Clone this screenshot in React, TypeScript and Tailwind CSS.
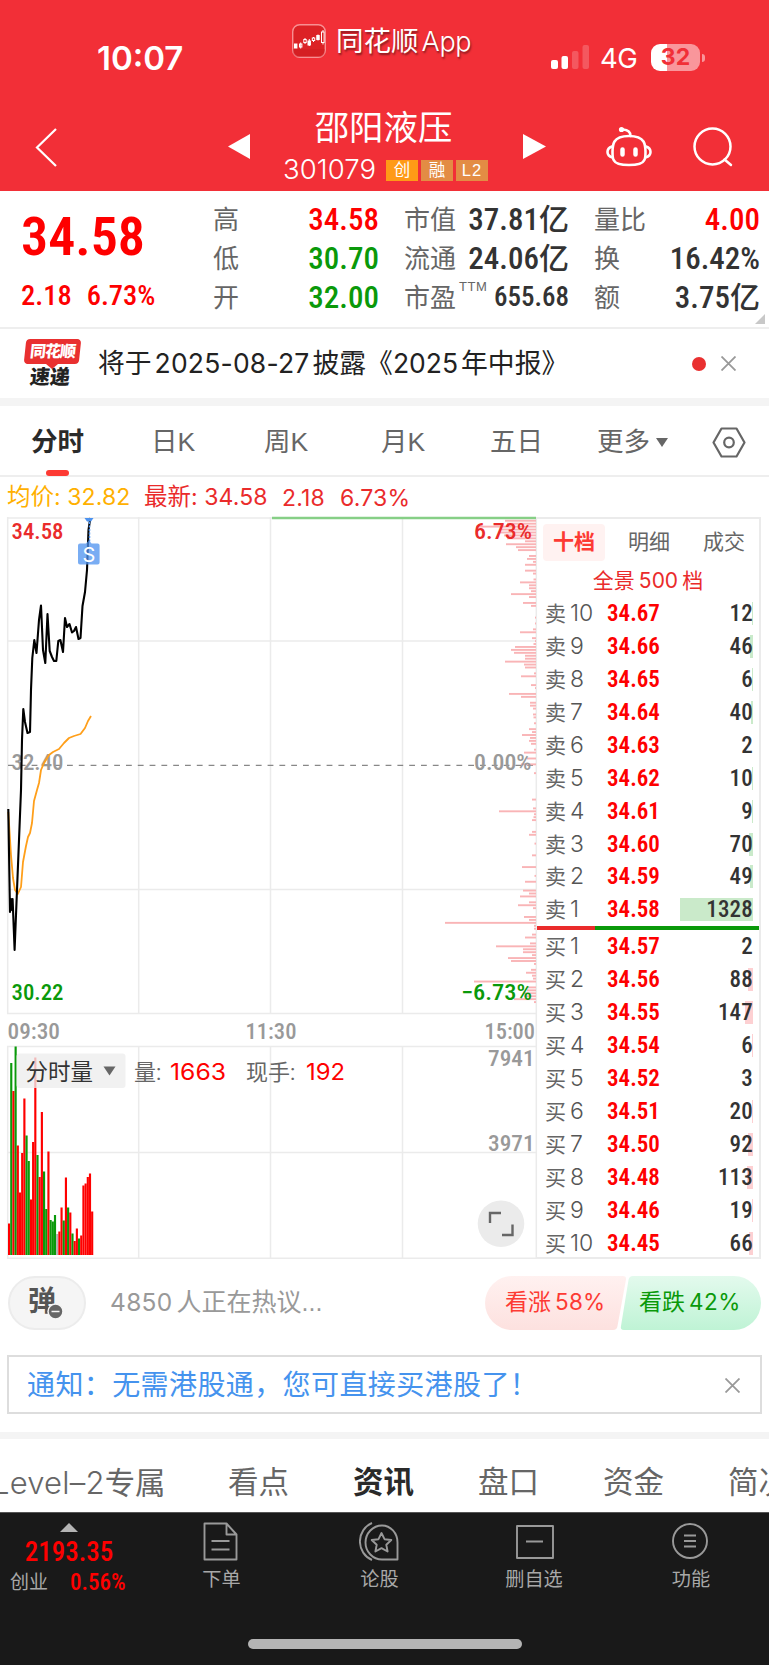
import type { ReactNode } from 'react'
import { clsx } from 'clsx'

const UP = '#fe0000'
const DOWN = '#0a990a'

const quoteColumns = [
  {
    className: 'ml-[213px] w-[166px]',
    rows: [
      { label: '高', value: '34.58', color: 'text-[#fe0000]' },
      { label: '低', value: '30.70', color: 'text-[#0a990a]' },
      { label: '开', value: '32.00', color: 'text-[#0a990a]' },
    ],
  },
  {
    className: 'ml-[25px] w-[165px]',
    rows: [
      { label: '市值', value: '37.81', unit: '亿' },
      { label: '流通', value: '24.06', unit: '亿' },
      { label: '市盈', sup: 'TTM', value: '655.68', small: true },
    ],
  },
  {
    className: 'ml-[25px] w-[166px]',
    rows: [
      { label: '量比', value: '4.00', color: 'text-[#fe0000]' },
      { label: '换', value: '16.42%' },
      { label: '额', value: '3.75', unit: '亿' },
    ],
  },
] as {
  className: string
  rows: { label: string; value: string; unit?: string; sup?: string; color?: string; small?: boolean }[]
}[]

const asks: [string, string, number][] = [
  ['10', '34.67', 12],
  ['9', '34.66', 46],
  ['8', '34.65', 6],
  ['7', '34.64', 40],
  ['6', '34.63', 2],
  ['5', '34.62', 10],
  ['4', '34.61', 9],
  ['3', '34.60', 70],
  ['2', '34.59', 49],
  ['1', '34.58', 1328],
]

const bids: [string, string, number][] = [
  ['1', '34.57', 2],
  ['2', '34.56', 88],
  ['3', '34.55', 147],
  ['4', '34.54', 6],
  ['5', '34.52', 3],
  ['6', '34.51', 20],
  ['7', '34.50', 92],
  ['8', '34.48', 113],
  ['9', '34.46', 19],
  ['10', '34.45', 66],
]

const pricePoints =
  '8.3,809 10,912 11,899 12,910 12.6,899 14.6,950 17,890 21,790 22,740 23.3,709 25,722 27.5,733 30,732 31,690 32.3,658 34.3,640 36.5,653 39,620 41,605.5 43,650 45.3,663 47.5,614 49.7,651 52,657 54,661 56.3,661 58.3,641 60.4,640 63,652 65,618 67,627 69.5,624 72,632.5 74,631 76,627 78.5,639 80.5,638 82.5,606 85,592 87,570 88.5,530 90.3,518'

const avgPoints =
  '8.3,812 11,855 13,878 15,890 17.8,894 21,887 23,862 26,846 28,837 30,833 32,823 34,801 37,790 39,783 41,770 44,763 49,755 53,752 59,749 64,743 69,738 74,736 80.5,734 85,728 88,721 91,716'

// r = up, g = down, n = flat
const volumes: [string, number][] = [
  ['r', 31.5], ['g', 192], ['r', 164], ['g', 208.5], ['r', 109.5], ['r', 62.5], ['r', 102],
  ['r', 156.5], ['g', 119.5], ['g', 94], ['r', 55.5], ['r', 113], ['r', 197.5], ['g', 100],
  ['r', 78], ['r', 143], ['g', 83.5], ['g', 46], ['r', 103.5], ['g', 35], ['g', 33.5],
  ['g', 40], ['n', 21], ['r', 23.5], ['r', 47.5], ['g', 34.5], ['r', 77.5], ['g', 47.5],
  ['r', 42.5], ['g', 21.5], ['r', 14], ['r', 26.5], ['g', 16.5], ['r', 19.5], ['r', 69.5],
  ['r', 71.5], ['r', 78], ['r', 81.5], ['r', 43.5],
]

const volumeColor: Record<string, string> = { r: UP, g: DOWN, n: '#b0b0b0' }

// turnover by price level: [slot, bar length], one slot every 2.94px
const levels: [number, number][] = [
  [0, 31], [1, 29], [2, 60], [3, 36], [4, 36], [5, 32], [6, 29], [7, 11], [8, 30], [9, 20], [10, 18],
  [12, 7], [13, 9], [14, 3], [15, 11], [17, 11], [18, 3], [20, 2.5], [21, 16], [22, 7], [23, 7],
  [24, 5], [25, 25], [26, 7], [28, 13], [29, 5], [33, 1], [35, 1], [37, 3], [38, 16], [40, 4],
  [41, 1], [42, 2.5], [43, 21], [44, 25], [45, 22], [46, 11], [47, 11], [48, 31], [49, 12], [50, 11],
  [52, 2], [53, 15], [56, 5], [57, 1], [59, 27], [60, 15], [62, 6], [63, 6], [64, 3], [66, 3], [67, 2.5],
  [69, 2], [71, 7], [72, 4], [73, 14], [74, 6], [75, 7], [76, 5], [78, 2], [79, 12], [81, 9], [83, 15],
  [86, 2], [95, 4], [98, 3], [99, 37], [100, 2], [101, 2.5], [102, 4], [106, 4], [107, 7], [110, 1.5],
  [114, 4], [118, 14], [121, 1.5], [123, 11], [126, 13], [127, 7], [128, 16], [130, 7], [131, 18],
  [132, 3], [135, 12], [136, 7], [137, 91], [138, 2], [139, 2], [141, 4], [142, 11], [144, 6],
  [145, 40], [146, 13], [147, 13], [148, 4], [149, 28], [150, 25], [151, 2], [153, 5], [154, 10],
  [155, 4], [156, 3], [157, 62], [159, 8], [160, 9], [161, 13], [162, 12], [163, 22], [164, 2],
]

function StatusBar() {
  return (
    <div className="flex h-[96px] items-start text-white">
      <div className="ml-[97px] mt-[38px] w-[195px] font-['Inter'] text-[33px] font-semibold leading-[40px] tracking-[0px]">
        10:07
      </div>
      <svg className="mt-[24px] h-[34px] w-[34px] shrink-0" viewBox="0 0 34 34">
        <rect x="0.7" y="0.7" width="32.6" height="32.6" rx="7" fill="#dc2226" stroke="#f88f92" strokeWidth="1.4" />
        <path d="M0.8 25h32v2q0 6-6 6h-20q-6 0-6-6z" fill="#c91a20" opacity="0.35" />
        <g stroke="#fff" strokeWidth="1" fill="none">
          <rect x="2.5" y="20" width="2.4" height="4" fill="#fff" />
          <rect x="7.5" y="20" width="2.4" height="3" />
          <path d="M8.7 18.5v6M13 14v6M17.3 15v7M21.5 13v5M26 10.5v6M31 6v14.5" />
          <rect x="11.8" y="15.5" width="2.4" height="3" fill="#dc2226" />
          <rect x="16" y="17" width="2.4" height="4" fill="#fff" />
          <rect x="20.3" y="14" width="2.4" height="2.5" fill="#dc2226" />
          <rect x="24.8" y="11.5" width="2.4" height="4" fill="#fff" />
          <rect x="29.5" y="8" width="2.6" height="10.5" fill="#dc2226" />
        </g>
      </svg>
      <div className="ml-[10px] mt-[22px] w-[215px] text-[27.500px] leading-[40px] [text-shadow:1px_2px_2px_rgba(0,0,0,0.45)]">
        同花顺<span className="ml-[3px] font-['Inter'] text-[27px] font-light tracking-[-0.3px]">App</span>
      </div>
      <svg className="mt-[45px] h-[24px] w-[38px] shrink-0" viewBox="0 0 38 24" fill="#fff">
        <rect x="0" y="15" width="7" height="9" rx="2" />
        <rect x="10.5" y="11" width="6.5" height="13" rx="2" />
        <rect x="21" y="6" width="6.5" height="18" rx="2" opacity="0.2" />
        <rect x="31.5" y="0" width="6.5" height="24" rx="2" opacity="0.2" />
      </svg>
      <div className="ml-[11px] mt-[38px] w-[51px] font-['Inter'] text-[27.500px] leading-[40px] tracking-[-0.4px]">4G</div>
      <div className="mt-[44px] flex h-[27px] w-[49px] items-center justify-center rounded-[9px] bg-linear-to-r from-white from-33% to-[#f9969b] to-33% font-['Inter'] text-[23px] font-bold leading-none text-[#f12f37]">
        32
      </div>
      <div className="ml-[2px] mt-[54px] h-[8px] w-[3px] rounded-r-full bg-[#f9969b]" />
    </div>
  )
}

function Tag({ children, className }: { children: ReactNode; className: string }) {
  return (
    <span className={clsx('flex h-[21px] w-[32px] items-center justify-center text-[16.500px] leading-none text-white', className)}>
      {children}
    </span>
  )
}

function TitleBar() {
  return (
    <div className="flex h-[95px] items-start text-white">
      <svg className="ml-[35px] mt-[32px] h-[39px] w-[22px] shrink-0" viewBox="0 0 22 39" fill="none" stroke="#fff" strokeWidth="2.2">
        <path d="M21 1L2 19.5L21 38" />
      </svg>
      <svg className="ml-[171px] mt-[38px] h-[25px] w-[22px] shrink-0" viewBox="0 0 22 25" fill="#fff">
        <path d="M0 12.500L22 0v25z" />
      </svg>
      <div className="ml-[33px] w-[206px]">
        <div className="mt-[12px] pr-[5px] text-center text-[34.400px] leading-[40px]">邵阳液压</div>
        <div className="mt-[7px] flex h-[30px] items-center">
          <span className="w-[103px] text-nowrap font-['Inter'] text-[27.500px] font-light tracking-[0.1px]">301079</span>
          <div className="flex gap-[3px]">
            <Tag className="bg-[#ff9a16]">创</Tag>
            <Tag className="bg-[#e38c44]">融</Tag>
            <Tag className="bg-[#e38c44] tracking-[1px]">L2</Tag>
          </div>
        </div>
      </div>
      <svg className="ml-[34px] mt-[38px] h-[25px] w-[23px] shrink-0" viewBox="0 0 23 25" fill="#fff">
        <path d="M23 12.500L0 0v25z" />
      </svg>
      <svg className="ml-[60px] mt-[30px] h-[42px] w-[46px] shrink-0" viewBox="0 0 46 42" fill="none" stroke="#fff" strokeWidth="2.6" strokeLinecap="round">
        <path d="M8.5 15.5Q12 10 23 10T37.5 15.5Q39.5 19 39.5 26T38 34.500Q36 39 23 39T8 34.500Q6.500 33 6.500 26T8.500 15.500Z" />
        <path d="M6 20.500Q1.500 22 1.500 26T6.500 31.500M40 20.500Q44.500 22 44.500 26T39.500 31.500M24.500 10Q24.500 4 17 3.500" />
        <circle cx="15.5" cy="3.5" r="1.3" fill="#fff" />
        <path d="M16.500 23.500v5M29.500 23.500v5" strokeWidth="4.5" />
      </svg>
      <svg className="ml-[41px] mt-[31px] h-[41px] w-[40px] shrink-0" viewBox="0 0 40 41" fill="none" stroke="#fff" strokeWidth="2.5" strokeLinecap="round">
        <circle cx="19.5" cy="19.5" r="18" />
        <path d="M31.500 32.500l6.500 5.500" />
      </svg>
    </div>
  )
}

function Quote() {
  return (
    <div className="relative flex h-[138px] border-b-2 border-[#eeeeee] pt-[9px]">
      <div className="absolute left-[21px] top-[14px] font-['Roboto'] text-[#fe0000]">
        <div className="text-nowrap text-[54px] font-semibold leading-[64px] [font-stretch:87%]">34.58</div>
        <div className="mt-[12px] flex gap-[15px] text-nowrap text-[28.500px] font-medium leading-[30px] [font-stretch:87%]">
          <span>2.18</span>
          <span>6.73%</span>
        </div>
      </div>
      {quoteColumns.map((column) => (
        <div key={column.className} className={clsx('shrink-0', column.className)}>
          {column.rows.map((row) => (
            <div key={row.label} className="flex h-[39px] items-center text-nowrap text-[26px] leading-none text-[#666]">
              <span>{row.label}</span>
              {row.sup && <span className="mb-[22px] ml-[3px] w-0 text-[13px] tracking-[0.5px]">{row.sup}</span>}
              <span
                className={clsx(
                  "ml-auto flex items-center font-['Roboto','Noto_Sans_CJK_SC'] font-medium [font-stretch:87%]",
                  row.small ? 'text-[27px]' : 'text-[31px]',
                  row.color ?? 'text-[#333]',
                )}
              >
                {row.value}
                {row.unit && <span className="text-[30px]">{row.unit}</span>}
              </span>
            </div>
          ))}
        </div>
      ))}
      <svg className="absolute bottom-[3px] right-[4px] h-[10px] w-[10px]" viewBox="0 0 10 10">
        <path d="M10 0v10H0z" fill="#c8c8c8" />
      </svg>
    </div>
  )
}

function Close({ className }: { className?: string }) {
  return (
    <svg className={clsx('h-[15px] w-[15px] shrink-0', className)} viewBox="0 0 15 15" stroke="#999" strokeWidth="1.8">
      <path d="M0.500 0.500l14 14M14.500 0.500l-14 14" />
    </svg>
  )
}

function NewsBar() {
  return (
    <div className="flex h-[69px] items-center">
      <div className="relative ml-[24px] h-[49px] w-[58px] shrink-0 text-nowrap">
        <div className="ml-[1px] flex h-[25px] w-[55px] -skew-x-6 items-center justify-center rounded-[4px] bg-[#e93030] text-[16px] font-black leading-none tracking-[-1px] text-white">
          同花顺
        </div>
        <div className="ml-[22px] h-0 w-0 border-x-[6px] border-t-[5px] border-x-transparent border-t-[#e93030]" />
        <div className="absolute left-[6px] top-[28px] -skew-x-6 text-[20px] font-black leading-[20px] text-[#222]">速递</div>
      </div>
      <div className="ml-[16px] w-[592px] text-nowrap text-[26.800px] leading-[40px] text-[#222]">
        将于<span className="mx-[3px] font-['Inter'] text-[26.500px] tracking-[0.2px]">2025-08-27</span>披露《
        <span className="mr-[3px] font-['Inter'] text-[26.500px]">2025</span>年中报》
      </div>
      <div className="ml-[2px] h-[14px] w-[14px] shrink-0 rounded-full bg-[#e93030]" />
      <Close className="ml-[15px]" />
    </div>
  )
}

function PeriodTabs() {
  return (
    <div className="flex h-[71px] items-center border-b-2 border-[#eeeeee] pt-[4px] text-nowrap text-[26.500px] text-[#666]">
      <div className="relative ml-[31px] w-[120px] font-bold text-[#2a2a2a]">
        分时
        <div className="absolute -bottom-[14px] left-[15px] h-[6px] w-[23px] rounded-[3px] bg-[#fd3a33]" />
      </div>
      <div className="w-[113px]">日K</div>
      <div className="w-[117px]">周K</div>
      <div className="w-[109px]">月K</div>
      <div className="w-[107px]">五日</div>
      <div className="flex w-[115px] items-center">
        更多
        <div className="ml-[6px] h-0 w-0 border-x-[6px] border-t-[9px] border-x-transparent border-t-[#666]" />
      </div>
      <svg className="h-[31px] w-[34px]" viewBox="0 0 34 31" fill="none" stroke="#666" strokeWidth="2.2">
        <path d="M9.500 1.500h15L32.500 15.500L24.500 29.500h-15L1.500 15.500z" strokeLinejoin="round" />
        <circle cx="17" cy="15.5" r="4.8" />
      </svg>
    </div>
  )
}

function Legend() {
  return (
    <div className="flex h-[40px] items-center pl-[7px] pt-[2px] text-nowrap text-[23.500px] text-[#ea2b2b]">
      <span className="w-[137px] text-[#ffb000]">
        均价<span className="font-['Inter'] text-[23px] tracking-[0.1px]">: 32.82</span>
      </span>
      <span className="w-[138px]">
        最新<span className="font-['Inter'] text-[23px] tracking-[0.1px]">: 34.58</span>
      </span>
      <span className="w-[58px] font-['Inter'] text-[23px] tracking-[0.2px]">2.18</span>
      <span className="font-['Inter'] text-[23px] tracking-[0.2px]">6.73%</span>
    </div>
  )
}

function Charts() {
  return (
    <svg className="h-[742px] w-[530px] shrink-0 overflow-visible" viewBox="7 517 530 742" fontFamily="Roboto, 'Noto Sans CJK SC', sans-serif">
      <g stroke="#ebebeb" strokeWidth="1.5" fill="none">
        <path d="M7 518H537M7 641H537M7 889.500H537M7 1013.500H537M7.700 517V1014M138.700 517V1014M270.500 517V1014M402.500 517V1014" />
        <path d="M7 1046.500H537M7 1152.500H537M7 1258.200H537M7.700 1046V1259M138.700 1046V1259M270.500 1046V1259M402.500 1046V1259M536.300 517V1259" />
      </g>
      <path d="M272 518H536" stroke="#86cf86" strokeWidth="2.5" />
      <path d="M8 765.400H536" stroke="#888" strokeWidth="1.3" strokeDasharray="5.8 6" />
      <g fill="#f9b4b6">
        {levels.map(([slot, length]) => (
          <rect key={slot} x={536 - length} y={519.8 + slot * 2.935} width={length} height="1.9" />
        ))}
      </g>
      <g fontSize="22.5" fontWeight="500" className="[font-stretch:87%]">
        <text x="11.5" y="539" fill="#ea2b2b" textLength="52" lengthAdjust="spacingAndGlyphs">34.58</text>
        <text x="474" y="539" fill="#ea2b2b" textLength="58" lengthAdjust="spacingAndGlyphs">6.73%</text>
        <text x="11.5" y="769.5" fill="#999" textLength="52" lengthAdjust="spacingAndGlyphs">32.40</text>
        <text x="474" y="769.5" fill="#999" textLength="57.5" lengthAdjust="spacingAndGlyphs">0.00%</text>
        <text x="11.5" y="1000" fill={DOWN} textLength="52" lengthAdjust="spacingAndGlyphs">30.22</text>
        <text x="461" y="1000" fill={DOWN} textLength="71" lengthAdjust="spacingAndGlyphs">−6.73%</text>
        <g fill="#999">
          <text x="7.5" y="1039" textLength="52.5" lengthAdjust="spacingAndGlyphs">09:30</text>
          <text x="245.5" y="1039" textLength="51" lengthAdjust="spacingAndGlyphs">11:30</text>
          <text x="484.5" y="1039" textLength="50.5" lengthAdjust="spacingAndGlyphs">15:00</text>
          <text x="488" y="1065.5" textLength="46.5" lengthAdjust="spacingAndGlyphs">7941</text>
          <text x="488" y="1151" textLength="46.5" lengthAdjust="spacingAndGlyphs">3971</text>
        </g>
      </g>
      <polyline points={avgPoints} fill="none" stroke="#ff9f1a" strokeWidth="1.8" strokeLinejoin="round" />
      <polyline points={pricePoints} fill="none" stroke="#000" strokeWidth="2.1" strokeLinejoin="round" />

      {/* Sell marker */}
      <path d="M84.500 518h9l-2.500 3.500h-4z" fill="#4c92ef" />
      <path d="M89.500 522v20" stroke="#4c92ef" strokeWidth="1.5" strokeDasharray="2 1.5" />
      <path d="M80 543.500h6l2.800-3 2.800 3h6q2 0 2 2v17q0 2-2 2H80q-2 0-2-2v-17q0-2 2-2z" fill="#4c92ef" opacity="0.75" />
      <text x="89" y="561.5" textAnchor="middle" fill="#fff" fontSize="20" fontFamily="Inter">S</text>

      {volumes.map(([kind, height], i) => (
        <rect key={i} x={8 + i * 2.187} y={1255 - height} width="2.15" height={height} fill={volumeColor[kind]} />
      ))}
      <rect x="16.5" y="1053.5" width="109" height="34.5" rx="3" fill="#ededed" opacity="0.78" />
      <text x="25.5" y="1079.5" fontSize="22.5" fill="#333" textLength="67.5">分时量</text>
      <path d="M103.500 1066.500h12l-6 9z" fill="#666" />
      <g fontSize="22">
        <text x="134" y="1079.5" fill="#666">量:</text>
        <text x="170" y="1080" fill={UP} fontFamily="Inter" fontSize="23" textLength="56" lengthAdjust="spacingAndGlyphs">1663</text>
        <text x="246" y="1079.5" fill="#666">现手:</text>
        <text x="306" y="1080" fill={UP} fontFamily="Inter" fontSize="23" textLength="39" lengthAdjust="spacingAndGlyphs">192</text>
      </g>

      <circle cx="501" cy="1223.7" r="23.3" fill="#ebebeb" />
      <path d="M490 1223v-10h11M502 1235h10.500v-10.500" fill="none" stroke="#666" strokeWidth="2.4" />
    </svg>
  )
}

function OrderRow({ side, row }: { side: '卖' | '买'; row: [string, string, number] }) {
  const [level, price, amount] = row
  return (
    <div className="relative flex h-[32.940px] items-center pl-[8px] text-nowrap leading-none">
      <span className="w-[25px] text-[21px] text-[#666]">{side}</span>
      <span className="w-[37px] font-['Inter'] text-[23px] font-light text-[#555]">{level}</span>
      <span className="font-['Roboto'] text-[23px] font-semibold text-[#fe0000] [font-stretch:87%]">{price}</span>
      <div
        className={clsx('absolute right-[6px] h-[23px]', side === '卖' ? 'bg-[#caeaca]' : 'bg-[#fdd0d2]')}
        style={{ width: amount < 5 ? 0 : Math.max(0.6, amount * 0.055) }}
      />
      <span className="relative ml-auto mr-[6px] font-['Roboto'] text-[23px] font-medium tracking-[0.2px] text-[#333] [font-stretch:87%]">
        {amount}
      </span>
    </div>
  )
}

function OrderBook() {
  return (
    <div className="h-[742px] w-[224px] shrink-0 border-y-2 border-r-2 border-[#ebebeb]">
      <div className="flex h-[46px] items-center pl-[6px] text-[21px] text-[#666]">
        <div className="flex h-[37px] w-[62px] items-center justify-center rounded-[4px] bg-[#fff2f1] font-bold text-[#fd3a33]">
          十档
        </div>
        <div className="ml-[23px]">明细</div>
        <div className="ml-[33px]">成交</div>
      </div>
      <div className="flex h-[32px] items-center justify-center text-[21px] text-[#ea2b2b]">
        全景<span className="mx-[4px] font-['Inter'] text-[21px]">500</span>档
      </div>
      {asks.map((row) => (
        <OrderRow key={row[0]} side="卖" row={row} />
      ))}
      <div className="flex h-[4px]">
        <div className="w-[58px] bg-[#ea2b2b]" />
        <div className="flex-1 bg-[#0a990a]" />
      </div>
      {bids.map((row) => (
        <OrderRow key={row[0]} side="买" row={row} />
      ))}
    </div>
  )
}

function Discussion() {
  return (
    <div className="flex h-[96px] items-center pb-[9px]">
      <div className="relative ml-[8px] h-[54px] w-[78px] shrink-0 rounded-full border-2 border-[#ececec] bg-[#f5f5f5]">
        <span className="absolute left-[18px] top-[8px] text-[28px] font-bold leading-[32px] text-[#555]">弹</span>
        <svg className="absolute left-[37px] top-[25px] h-[17px] w-[17px]" viewBox="0 0 17 17">
          <circle cx="8.5" cy="8.5" r="7.5" fill="#666" stroke="#f5f5f5" strokeWidth="1.5" />
          <path d="M4.500 8.500h8" stroke="#f5f5f5" strokeWidth="1.5" />
        </svg>
      </div>
      <div className="ml-[24px] w-[375px] text-nowrap text-[25px] text-[#999]">
        <span className="mr-[4px] font-['Inter'] text-[24.500px] tracking-[0.3px]">4850</span>人正在热议...
      </div>
      <div className="relative h-[54px] w-[276px]">
        <svg className="absolute inset-0 h-[54px] w-[276px]" viewBox="0 0 276 54">
          <defs>
            <linearGradient id="bull" x2="0" y2="1">
              <stop stopColor="#fff1f0" />
              <stop offset="1" stopColor="#fde1df" />
            </linearGradient>
            <linearGradient id="bear" x2="0" y2="1">
              <stop stopColor="#e3faed" />
              <stop offset="1" stopColor="#bff3d5" />
            </linearGradient>
          </defs>
          <path d="M27 0H138Q141.500 0 141 3.500L132.500 50Q132 54 128 54H27A27 27 0 0 1 27 0Z" fill="url(#bull)" />
          <path d="M148 0H249A27 27 0 0 1 249 54H139Q135 54 136 50L143.500 4Q144.200 0 148 0Z" fill="url(#bear)" />
        </svg>
        <div className="relative flex h-full items-center text-nowrap text-[23px]">
          <span className="ml-[20px] w-[134px] text-[#fd3a33]">
            看涨<span className="ml-[4px] font-['Inter'] text-[22.500px] tracking-[0.2px]">58%</span>
          </span>
          <span className="text-[#0a990a]">
            看跌<span className="ml-[4px] font-['Inter'] text-[22.500px] tracking-[0.5px]">42%</span>
          </span>
        </div>
      </div>
    </div>
  )
}

function InfoTabs() {
  return (
    <div className="flex h-[73px] items-center overflow-hidden pt-[15px] text-nowrap text-[30.500px] text-[#666]">
      <div className="-ml-[8px] w-[236px] shrink-0">
        <span className="font-['Inter'] text-[31px] font-light tracking-[0.2px]">Level–2</span>专属
      </div>
      <div className="w-[125px] shrink-0">看点</div>
      <div className="w-[125px] shrink-0 font-bold text-[#2a2a2a]">资讯</div>
      <div className="w-[125px] shrink-0">盘口</div>
      <div className="w-[125px] shrink-0">资金</div>
      <div className="shrink-0">简况</div>
    </div>
  )
}

function NavItem({ label, className, children }: { label: string; className: string; children: ReactNode }) {
  return (
    <div className={clsx('flex shrink-0 flex-col items-center pt-[8px]', className)}>
      <svg className="h-[40px] w-[42px]" viewBox="0 0 42 40" fill="none" stroke="#999" strokeWidth="1.9" strokeLinejoin="round">
        {children}
      </svg>
      <span className="mt-[4px] text-nowrap text-[19.200px] leading-[30px]">{label}</span>
    </div>
  )
}

function BottomNav() {
  return (
    <div className="h-[153px] border-t border-[#555] bg-[#191919] text-[#a8a8a8]">
      <div className="flex h-[126px]">
        <div className="w-[138px] shrink-0 pt-[10px]">
          <div className="ml-[60px] h-0 w-0 border-x-[9px] border-b-[9px] border-x-transparent border-b-[#b4b4b4]" />
          <div className="mt-[5px] text-center font-['Roboto'] text-[27px] font-medium leading-[30px] text-[#fe0000] [font-stretch:87%]">2193.35</div>
          <div className="mt-[3px] flex items-center pl-[10px] text-[19px] leading-[26px]">
            <span className="w-[60px]">创业</span>
            <span className="font-['Roboto'] text-[23px] font-medium text-[#fe0000] [font-stretch:87%]">0.56%</span>
          </div>
        </div>
        <NavItem label="下单" className="ml-[52px] w-[63px]">
          <path d="M3.500 2.500h22l10 11v25h-32zM25.500 2.500v11h10M10.500 20h18M10.500 28.500h18" />
        </NavItem>
        <NavItem label="论股" className="ml-[94px] w-[65px]">
          <path d="M23 4.500a16.500 17 0 0 0 0 34h15.500v-17A15.500 17 0 0 0 23 4.500z" />
          <path d="M13 2A19.500 20 0 0 0 13 39" />
          <path d="M22.500 12l3 6.200 6.800.8-5 4.700 1.300 6.800-6.100-3.400-6.100 3.400 1.300-6.800-5-4.700 6.800-.8z" />
        </NavItem>
        <NavItem label="删自选" className="ml-[92px] w-[60px]">
          <path d="M4 5h36v32H4zM13 20.500h17" />
        </NavItem>
        <NavItem label="功能" className="ml-[97px] w-[60px]">
          <circle cx="20" cy="20" r="17" />
          <path d="M14 14.500h12M14 20h12M14 25.500h12" />
        </NavItem>
      </div>
      <div className="ml-[248px] h-[10px] w-[274px] rounded-full bg-[#b4b4b4]" />
    </div>
  )
}

export default function App() {
  return (
    <div className="h-[1665px] w-[769px] overflow-hidden bg-white font-['Liberation_Sans','Noto_Sans_CJK_SC',sans-serif]">
      <div className="h-[191px] bg-[#f22f37]">
        <StatusBar />
        <TitleBar />
      </div>
      <Quote />
      <NewsBar />
      <div className="h-[8px] bg-[#f4f4f4]" />
      <PeriodTabs />
      <Legend />
      <div className="flex pl-[7px]">
        <Charts />
        <OrderBook />
      </div>
      <Discussion />
      <div className="mx-[7px] flex h-[59px] items-center border-2 border-[#dddddd] pl-[18px] pt-[2px] text-[28px] tracking-[0.4px] text-[#4593ee]">
        <span className="w-[698px]">通知：无需港股通，您可直接买港股了！</span>
        <Close />
      </div>
      <div className="mt-[18px] h-[7px] bg-[#f4f4f4]" />
      <InfoTabs />
      <BottomNav />
    </div>
  )
}
